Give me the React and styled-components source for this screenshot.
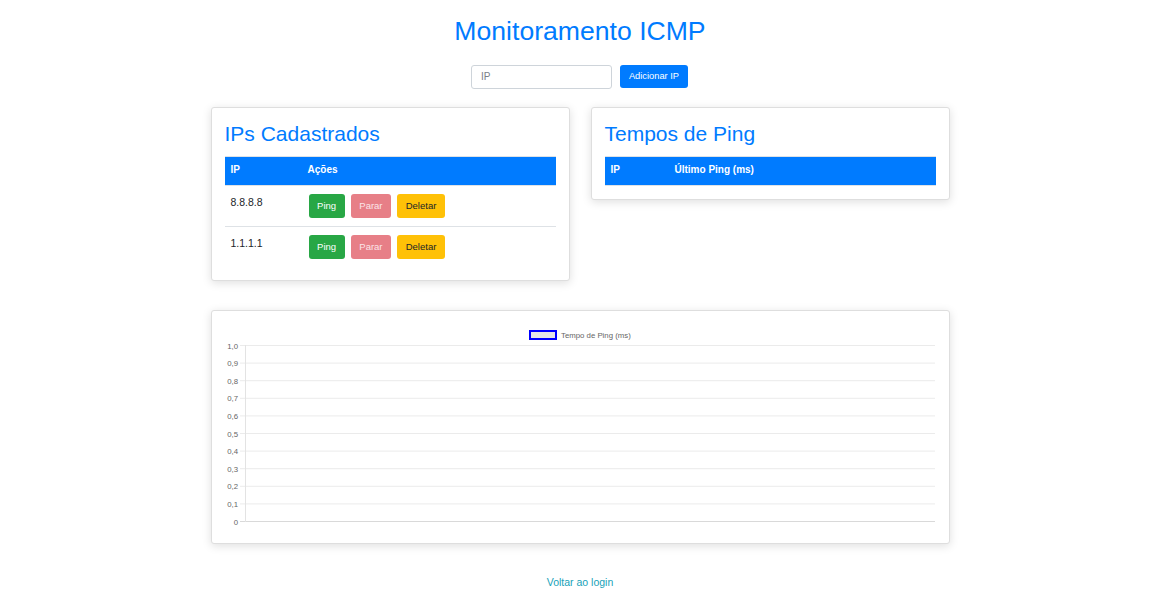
import React from 'react'
import styled, { createGlobalStyle } from 'styled-components'

const GlobalStyle = createGlobalStyle`
  html, body {
    margin: 0;
    padding: 0;
    background: #fff;
    font-family: "Liberation Sans", Arial, sans-serif;
    color: #212529;
  }
`

const ips = ['8.8.8.8', '1.1.1.1']
const ticks = ['1,0', '0,9', '0,8', '0,7', '0,6', '0,5', '0,4', '0,3', '0,2', '0,1', '0']

const App = () => {
  return (
    <Page>
      <GlobalStyle />
      <Title>Monitoramento ICMP</Title>
      <AddForm>
        <IpInput placeholder="IP" />
        <AddButton>Adicionar IP</AddButton>
      </AddForm>

      <CardsRow>
        <Card>
          <CardTitle>IPs Cadastrados</CardTitle>
          <Table>
            <thead>
              <tr>
                <Th $width="65px">IP</Th>
                <Th>Ações</Th>
              </tr>
            </thead>
            <tbody>
              {ips.map((ip) => (
                <tr key={ip}>
                  <Td>{ip}</Td>
                  <Td>
                    <Actions>
                      <ActionButton $bg="#28a745" $color="#fff">Ping</ActionButton>
                      <ActionButton $bg="#e77f87" $color="#fbe5e7">Parar</ActionButton>
                      <ActionButton $bg="#ffc107" $color="#212529">Deletar</ActionButton>
                    </Actions>
                  </Td>
                </tr>
              ))}
            </tbody>
          </Table>
        </Card>

        <Card>
          <CardTitle>Tempos de Ping</CardTitle>
          <Table>
            <thead>
              <tr>
                <Th $width="52px">IP</Th>
                <Th>Último Ping (ms)</Th>
              </tr>
            </thead>
          </Table>
        </Card>
      </CardsRow>

      <ChartCard>
        <svg width="711" height="206" viewBox="0 0 711 206">
          <rect x="305" y="7" width="26" height="8" fill="#e6e6e6" stroke="#0000ff" strokeWidth="2" />
          <text x="336" y="14" fontSize="7.8" fill="#666" fontFamily="Liberation Sans, Arial, sans-serif">
            Tempo de Ping (ms)
          </text>
          {ticks.map((t, i) => {
            const y = 21.5 + i * 17.6
            return (
              <g key={t}>
                <line x1="15" x2="710" y1={y} y2={y} stroke={i === ticks.length - 1 ? '#d9d9d9' : '#ebebeb'} strokeWidth="1" />
                <text x="13" y={y + 3} fontSize="7.8" fill="#666" textAnchor="end" fontFamily="Liberation Sans, Arial, sans-serif">
                  {t}
                </text>
              </g>
            )
          })}
          <line x1="20.5" x2="20.5" y1="21" y2="198" stroke="#e3e3e3" strokeWidth="1" />
        </svg>
      </ChartCard>

      <BackLink href="#">Voltar ao login</BackLink>
    </Page>
  )
}

const Page = styled.div`
  width: 1160px;
  display: flex;
  flex-direction: column;
  align-items: center;
  padding-top: 15px;
  padding-bottom: 20px;
`

const Title = styled.h1`
  margin: 0 0 16px;
  font-size: 26.6px;
  line-height: 33.6px;
  font-weight: 400;
  color: #007bff;
`

const AddForm = styled.div`
  display: flex;
  gap: 8px;
  align-items: flex-start;
  margin-bottom: 18px;
  padding-right: 1px;
`

const IpInput = styled.input`
  box-sizing: border-box;
  width: 141px;
  height: 24px;
  padding: 0 9px;
  border: 1px solid #ced4da;
  border-radius: 3px;
  font-family: "Liberation Sans", Arial, sans-serif;
  font-size: 10px;
  color: #495057;
  outline: none;

  &::placeholder {
    color: #7a8086;
  }
`

const AddButton = styled.button`
  box-sizing: border-box;
  height: 23px;
  width: 68px;
  padding: 0;
  border: none;
  border-radius: 3px;
  background: #007bff;
  color: #fff;
  font-family: "Liberation Sans", Arial, sans-serif;
  font-size: 9.3px;
`

const CardsRow = styled.div`
  display: flex;
  align-items: flex-start;
  gap: 21px;
  margin-bottom: 29px;
`

const Card = styled.section`
  box-sizing: border-box;
  width: 359px;
  padding: 13px;
  background: #fff;
  border: 1px solid #dedede;
  border-radius: 3px;
  box-shadow: 0 2px 10px rgba(0, 0, 0, 0.13);
`

const CardTitle = styled.h2`
  margin: 0 0 10px;
  font-size: 21px;
  line-height: 25px;
  font-weight: 400;
  color: #007bff;
`

const Table = styled.table`
  width: 100%;
  border-collapse: collapse;
  font-size: 10.5px;
`

const Th = styled.th`
  width: ${(p) => p.$width || 'auto'};
  text-align: left;
  padding: 5px 6px 7px;
  line-height: 16px;
  font-size: 10px;
  font-weight: 700;
  color: #fff;
  background: #007bff;
  border-top: 1px solid #dee2e6;
  border-bottom: 1px solid #dee2e6;
`

const Td = styled.td`
  vertical-align: top;
  padding: 8px 6px;
  line-height: 16px;
  border-top: 1px solid #dee2e6;

  tr:first-child > & {
    border-top: none;
  }
`

const Actions = styled.div`
  display: flex;
  gap: 6px;
  padding-left: 1px;
`

const ActionButton = styled.button`
  height: 24px;
  padding: 0 8.6px;
  border: none;
  border-radius: 3px;
  background: ${(p) => p.$bg};
  color: ${(p) => p.$color};
  font-family: "Liberation Sans", Arial, sans-serif;
  font-size: 9.5px;
`

const ChartCard = styled(Card)`
  width: 739px;
  line-height: 0;
  margin-bottom: 30px;
`

const BackLink = styled.a`
  font-size: 10.5px;
  line-height: 16px;
  color: #17a2b8;
  text-decoration: none;
`

export default App
